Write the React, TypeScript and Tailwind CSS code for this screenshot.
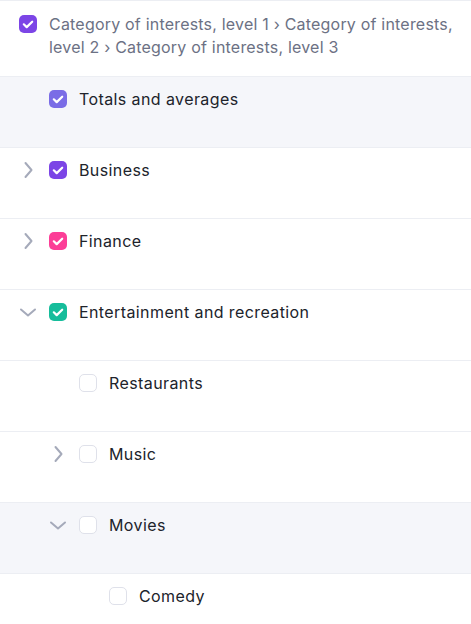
import React from 'react';

type Row = {
  label: string;
  level: 1 | 2 | 3;
  toggle?: 'open' | 'closed';
  color?: string;
  shaded?: boolean;
};

const ROWS: Row[] = [
  { label: 'Totals and averages', level: 1, color: 'bg-[#7a6ce6]', shaded: true },
  { label: 'Business', level: 1, toggle: 'closed', color: 'bg-[#7c45e6]' },
  { label: 'Finance', level: 1, toggle: 'closed', color: 'bg-[#fc3e97]' },
  { label: 'Entertainment and recreation', level: 1, toggle: 'open', color: 'bg-[#16bd9b]' },
  { label: 'Restaurants', level: 2 },
  { label: 'Music', level: 2, toggle: 'closed' },
  { label: 'Movies', level: 2, toggle: 'open', shaded: true },
  { label: 'Comedy', level: 3 },
];

const INDENT: Record<number, string> = {
  1: 'pl-[19px]',
  2: 'pl-[49px]',
  3: 'pl-[79px]',
};

const Check = ({ color }: { color?: string }) =>
  color ? (
    <div className={`flex h-[18px] w-[18px] shrink-0 items-center justify-center rounded-[5px] ${color}`}>
      <svg width="18" height="18" viewBox="0 0 18 18" fill="none">
        <path d="M4.8 9.3l2.9 2.8 5.5-5.4" stroke="white" strokeWidth="2.2" strokeLinecap="round" strokeLinejoin="round" />
      </svg>
    </div>
  ) : (
    <div className="h-[18px] w-[18px] shrink-0 rounded-[5px] border border-[#dfe1ea] bg-white" />
  );

const Chevron = ({ state }: { state?: 'open' | 'closed' }) => (
  <div className="flex h-[18px] w-[18px] shrink-0 items-center justify-center">
    {state === 'closed' && (
      <svg width="18" height="18" viewBox="0 0 18 18" fill="none">
        <path d="M6.5 2l6 7-6 7" stroke="#a5aaba" strokeWidth="2" strokeLinecap="round" strokeLinejoin="round" />
      </svg>
    )}
    {state === 'open' && (
      <svg width="18" height="18" viewBox="0 0 18 18" fill="none">
        <path d="M2 6.5l7 6 7-6" stroke="#a5aaba" strokeWidth="2" strokeLinecap="round" strokeLinejoin="round" />
      </svg>
    )}
  </div>
);

export default function App() {
  return (
    <div className="min-h-screen bg-white font-['Inter',sans-serif] text-[16px]">
      {/* breadcrumb header */}
      <div className="flex items-start gap-3 border-y border-[#eceef3] pl-[19px] pr-4 pt-3 pb-[17px]">
        <div className="mt-[2px]">
          <Check color="bg-[#7c45e6]" />
        </div>
        <p className="leading-[23px] tracking-[0.2px] text-[#6c7184]">
          Category of interests, level 1 › Category of interests, level 2 › Category of interests, level 3
        </p>
      </div>

      {ROWS.map((row) => (
        <div
          key={row.label}
          className={`flex h-[71px] items-start gap-3 border-b border-[#eceef3] pt-[10px] ${INDENT[row.level]} ${
            row.shaded ? 'bg-[#f5f6fa]' : 'bg-white'
          }`}
        >
          <div className="mt-[3px]">
            <Chevron state={row.toggle} />
          </div>
          <div className="mt-[3px]">
            <Check color={row.color} />
          </div>
          <span className="leading-6 tracking-[0.4px] text-[#20232b]">{row.label}</span>
        </div>
      ))}
    </div>
  );
}
